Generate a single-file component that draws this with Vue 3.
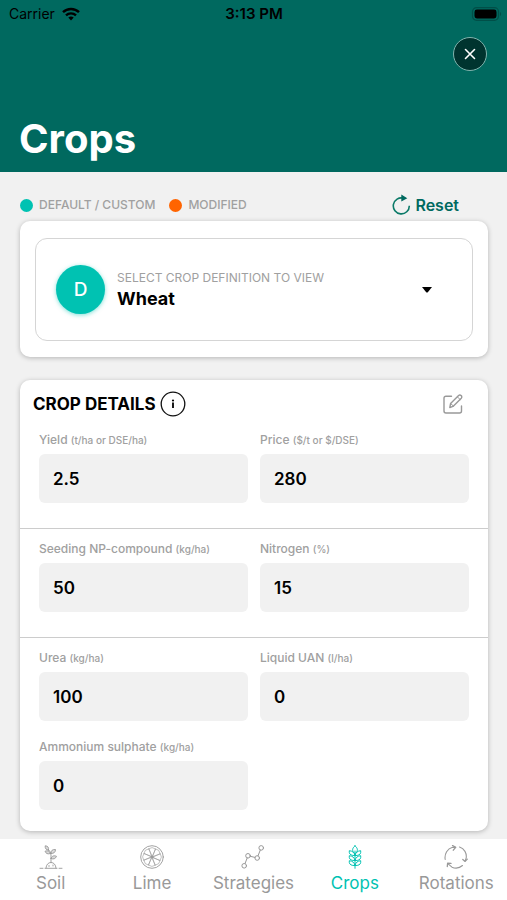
<script setup>
import { ref } from 'vue'

const crop = ref('Wheat')
const active = ref('Crops')

const sections = ref([
  [
    { id: 'yield', name: 'Yield', unit: '(t/ha or DSE/ha)', value: '2.5' },
    { id: 'price', name: 'Price', unit: '($/t or $/DSE)', value: '280' },
  ],
  [
    { id: 'np', name: 'Seeding NP-compound', unit: '(kg/ha)', value: '50' },
    { id: 'nitrogen', name: 'Nitrogen', unit: '(%)', value: '15' },
  ],
  [
    { id: 'urea', name: 'Urea', unit: '(kg/ha)', value: '100' },
    { id: 'uan', name: 'Liquid UAN', unit: '(l/ha)', value: '0' },
    { id: 'sulphate', name: 'Ammonium sulphate', unit: '(kg/ha)', value: '0' },
  ],
])

const tabs = ['Soil', 'Lime', 'Strategies', 'Crops', 'Rotations']
</script>

<template>
  <div class="screen">
    <header class="hero">
      <div class="status">
        <div class="carrier">
          <span>Carrier</span>
          <svg width="18" height="14" viewBox="0 0 18 14" fill="none" stroke="#000" stroke-width="2.4">
            <path d="M1 5.2C5.4 .9 12.6 .9 17 5.2" />
            <path d="M4 8.3c2.8-2.6 7.2-2.6 10 0" />
            <path d="M6.3 10.6c1.6-1.4 3.8-1.4 5.4 0L9 13.4z" fill="#000" stroke="none" />
          </svg>
        </div>
        <strong>3:13 PM</strong>
        <div class="power">
          <svg width="32" height="14" viewBox="0 0 32 14">
            <rect x="1.5" y=".7" width="26" height="12.6" rx="4" fill="none" stroke="#004f48" stroke-width="1.2" />
            <rect x="3.5" y="2.6" width="22" height="8.8" rx="2.4" fill="#000" />
            <path d="M29 5v4c1.500-.5 1.500-3.500 0-4z" fill="#004f48" />
          </svg>
        </div>
      </div>
      <div class="actions">
        <button class="close" type="button">
          <svg width="12" height="12" viewBox="0 0 12 12" stroke="#fff" stroke-width="1.6" stroke-linecap="round">
            <path d="M1.500 1.500l9 9M10.500 1.500l-9 9" />
          </svg>
        </button>
      </div>
      <h1>Crops</h1>
    </header>

    <main class="content">
      <div class="legend">
        <span class="key"><i class="dot teal"></i>DEFAULT / CUSTOM</span>
        <span class="key"><i class="dot orange"></i>MODIFIED</span>
        <button class="reset" type="button">
          <svg width="19" height="22" viewBox="0 0 19 22" fill="none" stroke="#0b7a68" stroke-width="1.600">
            <path d="M11.500 4.200A8 8 0 1 0 17.300 11.800" />
            <path d="M9.300 .6L15.300 4.200L9.300 7.600z" fill="#00695f" stroke="none" />
          </svg>
          Reset
        </button>
      </div>

      <section class="card picker">
        <div class="picker-box">
          <span class="avatar">D</span>
          <div class="picker-text">
            <label for="crop">SELECT CROP DEFINITION TO VIEW</label>
            <select id="crop" v-model="crop">
              <option>Wheat</option>
            </select>
          </div>
          <svg class="caret" width="10" height="6" viewBox="0 0 10 6"><path d="M0 0h10L6 5q-1 1-2 0z" /></svg>
        </div>
      </section>

      <section class="card">
        <div class="card-head">
          <h2>CROP DETAILS</h2>
          <button class="icon-btn" type="button">
            <svg width="26" height="26" viewBox="0 0 26 26">
              <circle cx="13" cy="13" r="11.800" fill="none" stroke="#111" stroke-width="1.300" />
              <circle cx="13" cy="9.500" r="1.100" />
              <path d="M12.100 11.500h1.800v5.500h-1.800z" />
            </svg>
          </button>
          <button class="icon-btn edit" type="button">
            <svg width="20" height="20" viewBox="0 0 20 20" fill="none" stroke="#999" stroke-width="1.400" stroke-linejoin="round" stroke-linecap="round">
              <path d="M8.500 2.300H3Q1 2.300 1 4.300V17q0 2 2 2H16.500q2 0 2-2V12" />
              <path d="M6.800 13.600l.8-4.100L15.600 1.500q1.300-1 2.500 .1t.2 2.600L10.500 12.100z" />
              <path d="M14.300 2.800l2.800 2.700M7.600 9.500l2.900 2.600" stroke-width="1" />
            </svg>
          </button>
        </div>
        <div v-for="(fields, i) in sections" :key="i" class="group">
          <div v-for="f in fields" :key="f.id" class="field">
            <label :for="f.id">{{ f.name }} <small>{{ f.unit }}</small></label>
            <input :id="f.id" v-model="f.value" type="text" inputmode="decimal" />
          </div>
        </div>
      </section>
    </main>

    <nav class="tabs">
      <a v-for="t in tabs" :key="t" href="#" :class="{ active: t === active }" @click.prevent="active = t">
        <svg width="24" height="24" viewBox="0 0 24 24" fill="none" stroke="currentColor" stroke-linejoin="round" stroke-linecap="round">
          <g v-if="t === 'Soil'" stroke-width=".9">
            <path d="M1 23.300h3M6 23.300h12M20 23.300h3" />
            <path d="M7 23c.3-3.500 2.300-5.500 5-5.500s4.700 2 5 5.500M10 20.500v1M14 20v1M12 17.500V10Q12 7 9.500 4.500" />
            <path d="M9.500 5C7 5 6 3.500 6.200 .8C9 1 10 2.500 9.500 5zM11.500 8.500C8.500 9.500 7 8.500 6 6.300C8.500 5.300 10.500 6 11.500 8.500zM12 8.500C11.800 5.500 13.500 4.200 16.500 4.500C16.500 7.300 14.800 8.700 12 8.500zM12 13.500C13 10.800 15 10.200 17.500 11.300C16.500 13.800 14.500 14.600 12 13.500z" fill="currentColor" fill-opacity=".35" />
          </g>
          <g v-else-if="t === 'Lime'" stroke-width=".9">
            <circle cx="12" cy="12" r="11.300" />
            <circle cx="12" cy="12" r="1" fill="currentColor" />
            <path v-for="n in 8" :key="n" :transform="`rotate(${n * 45} 12 12)`" d="M12 11L8.600 3.800Q12 1.300 15.400 3.800z" stroke-width=".6" />
          </g>
          <g v-else-if="t === 'Strategies'">
            <circle cx="3.200" cy="20.800" r="2.300" />
            <circle cx="7" cy="10.800" r="2.300" />
            <circle cx="16.200" cy="13" r="2.300" />
            <circle cx="20.200" cy="2.900" r="2.300" />
            <path d="M4 18.600L6.200 13M9.300 11.300l4.600 1.100M17 10.800l2.300-5.700" />
          </g>
          <g v-else-if="t === 'Crops'">
            <path d="M12 23.300V6M12 .8C8.800 3.500 8.800 6 12 8.800C15.200 6 15.200 3.500 12 .8z" />
            <path v-for="y in [0, 5, 10]" :key="y" :transform="`translate(0 ${y})`" d="M12 10.500C11.500 7.500 9.500 6 6.300 5.700V7.500C6.500 9.500 8.500 10.800 12 10.500zM12 10.500C12.500 7.500 14.500 6 17.700 5.700V7.500C17.500 9.500 15.500 10.800 12 10.500z" />
          </g>
          <g v-else stroke-width="1.100">
            <path d="M1.200 14.500C.2 9 3.500 3.500 8.500 2.200L11.500 2.400M15.500 2c4.800 1.500 7.600 6.300 6.600 11.500l-1 2.500M18.500 20.500c-3 2.600-7 3.200-10.500 1.700L3.800 18.700" />
            <path d="M8.500 .5l3.200 1.900-2.400 2.800M18.800 14.500l2.300 1.900 2.200-2.300M3.300 21.500l.3-3.300 3.400 .2" stroke-width="1.300" />
          </g>
        </svg>
        <span>{{ t }}</span>
      </a>
    </nav>
  </div>
</template>

<style>
body {
  background: #f1f1f1;
}
</style>

<style scoped>
.screen {
  min-height: 100vh;
  display: flex;
  flex-direction: column;
  box-sizing: border-box;
  color: #000;
  font-family: Inter, "Liberation Sans", sans-serif;
}
button {
  display: flex;
  align-items: center;
  padding: 0;
  border: 0;
  background: none;
  font: inherit;
  cursor: pointer;
}
svg {
  display: block;
  flex: none;
}
.hero {
  background: #00695f;
}
.status {
  display: grid;
  grid-template-columns: 1fr auto 1fr;
  align-items: center;
  height: 27px;
  padding: 0 8px 0 9px;
  font-size: 14px;
}
.status strong {
  font-size: 15px;
  font-weight: 600;
}
.carrier {
  display: flex;
  align-items: center;
  gap: 7px;
}
.power {
  display: flex;
  justify-content: flex-end;
  margin-right: -4px;
}
.actions {
  display: flex;
  justify-content: flex-end;
  padding: 10px 20px 0;
}
.close {
  justify-content: center;
  width: 34px;
  height: 34px;
  border: 1px solid #80b4ae;
  border-radius: 50%;
  background: #00342f;
}
h1 {
  margin: 0;
  padding: 44px 19px 9px;
  color: #fff;
  font-size: 40px;
  line-height: 48px;
  font-weight: 700;
}
.content {
  flex: 1;
  padding: 0 19px 8px 20px;
}
.legend {
  display: flex;
  align-items: center;
  gap: 14px;
  padding: 19px 0 2px;
  color: #a0a0a0;
  font-size: 12px;
  font-weight: 500;
  line-height: 28px;
}
.key {
  display: flex;
  align-items: center;
  gap: 6px;
}
.dot {
  width: 13px;
  height: 13px;
  border-radius: 50%;
}
.teal {
  background: #00c2b2;
}
.orange {
  background: #ff6400;
}
.reset {
  gap: 4px;
  margin: 0 29px 0 auto;
  color: #00695f;
  font-size: 16px;
  font-weight: 600;
  line-height: 27px;
}
.card {
  border-radius: 10px;
  background: #fff;
  box-shadow: 0 1px 5px rgba(0, 0, 0, 0.25);
}
.picker {
  margin-bottom: 23px;
  padding: 17px 15px 16px;
}
.picker-box {
  display: flex;
  align-items: center;
  gap: 12px;
  padding: 26px 40px 26px 20px;
  border: 1px solid #d5d5d5;
  border-radius: 12px;
}
.avatar {
  display: flex;
  align-items: center;
  justify-content: center;
  width: 49px;
  height: 49px;
  border-radius: 50%;
  background: #00c2b2;
  box-shadow: 0 1px 4px rgba(0, 194, 178, 0.5);
  color: #fff;
  font-size: 19px;
  font-weight: 500;
}
.picker-text {
  display: flex;
  flex: 1;
  flex-direction: column;
}
.picker-text label {
  color: #a0a0a0;
  font-size: 12px;
  line-height: 18px;
}
select {
  appearance: none;
  padding: 0;
  border: 0;
  background: none;
  color: #000;
  font: 700 18px/24px Inter, "Liberation Sans", sans-serif;
}
.card-head {
  display: flex;
  align-items: center;
  gap: 4px;
  height: 47px;
  padding: 0 25px 0 13px;
}
h2 {
  margin: 0;
  font-size: 17px;
  font-weight: 700;
}
.edit {
  margin-left: auto;
}
.group {
  display: grid;
  grid-template-columns: 1fr 1fr;
  gap: 18px 12px;
  padding: 12px 19px 25px;
}
.group:nth-child(2) {
  padding-top: 5px;
}
.group + .group {
  border-top: 1px solid #ccc;
}
.group:last-child {
  padding-bottom: 21px;
}
.field {
  display: flex;
  flex-direction: column;
  gap: 6px;
  min-width: 0;
}
.field label {
  color: #a0a0a0;
  font-size: 12px;
  font-weight: 500;
  line-height: 16px;
}
small {
  font-size: 10px;
}
input {
  box-sizing: border-box;
  width: 100%;
  height: 49px;
  padding: 0 14px;
  border: 0;
  border-radius: 6px;
  background: #f1f1f1;
  color: #000;
  font: 600 17px Inter, "Liberation Sans", sans-serif;
}
.tabs {
  display: grid;
  grid-template-columns: repeat(5, 1fr);
  height: 61px;
  background: #fff;
}
.tabs a {
  display: flex;
  flex-direction: column;
  align-items: center;
  gap: 4px;
  padding-top: 6px;
  color: #999;
  font-size: 17px;
  line-height: 20px;
  text-decoration: none;
}
.tabs a.active {
  color: #00c2b2;
}
</style>
